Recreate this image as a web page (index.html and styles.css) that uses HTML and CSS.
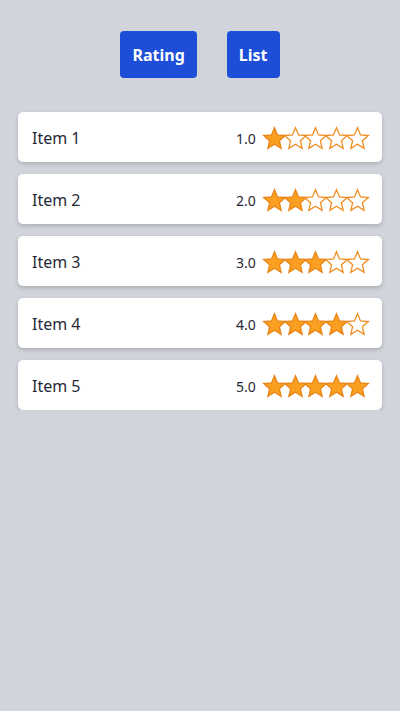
FILE: index.html
```html
<!DOCTYPE html>
<html>
<head>
<meta charset="utf-8">
<link rel="stylesheet" href="styles.css">
</head>
<body>
<svg width="0" height="0" class="defs">
  <defs>
    <path id="star" d="M12 1.6 L14.9 8.6 L22.4 9.2 L16.7 14.1 L18.4 21.5 L12 17.5 L5.6 21.5 L7.3 14.1 L1.6 9.2 L9.1 8.6 Z"/>
  </defs>
</svg>
<div class="toolbar">
  <button class="btn">Rating</button>
  <button class="btn">List</button>
</div>
<div class="list">
  <div class="card"><span class="name">Item 1</span><div class="rating"><span class="num">1.0</span><span class="stars">
    <svg class="s on" viewBox="0 0 24 24"><use href="#star"/></svg><svg class="s" viewBox="0 0 24 24"><use href="#star"/></svg><svg class="s" viewBox="0 0 24 24"><use href="#star"/></svg><svg class="s" viewBox="0 0 24 24"><use href="#star"/></svg><svg class="s" viewBox="0 0 24 24"><use href="#star"/></svg></span></div></div>
  <div class="card"><span class="name">Item 2</span><div class="rating"><span class="num">2.0</span><span class="stars">
    <svg class="s on" viewBox="0 0 24 24"><use href="#star"/></svg><svg class="s on" viewBox="0 0 24 24"><use href="#star"/></svg><svg class="s" viewBox="0 0 24 24"><use href="#star"/></svg><svg class="s" viewBox="0 0 24 24"><use href="#star"/></svg><svg class="s" viewBox="0 0 24 24"><use href="#star"/></svg></span></div></div>
  <div class="card"><span class="name">Item 3</span><div class="rating"><span class="num">3.0</span><span class="stars">
    <svg class="s on" viewBox="0 0 24 24"><use href="#star"/></svg><svg class="s on" viewBox="0 0 24 24"><use href="#star"/></svg><svg class="s on" viewBox="0 0 24 24"><use href="#star"/></svg><svg class="s" viewBox="0 0 24 24"><use href="#star"/></svg><svg class="s" viewBox="0 0 24 24"><use href="#star"/></svg></span></div></div>
  <div class="card"><span class="name">Item 4</span><div class="rating"><span class="num">4.0</span><span class="stars">
    <svg class="s on" viewBox="0 0 24 24"><use href="#star"/></svg><svg class="s on" viewBox="0 0 24 24"><use href="#star"/></svg><svg class="s on" viewBox="0 0 24 24"><use href="#star"/></svg><svg class="s on" viewBox="0 0 24 24"><use href="#star"/></svg><svg class="s" viewBox="0 0 24 24"><use href="#star"/></svg></span></div></div>
  <div class="card"><span class="name">Item 5</span><div class="rating"><span class="num">5.0</span><span class="stars">
    <svg class="s on" viewBox="0 0 24 24"><use href="#star"/></svg><svg class="s on" viewBox="0 0 24 24"><use href="#star"/></svg><svg class="s on" viewBox="0 0 24 24"><use href="#star"/></svg><svg class="s on" viewBox="0 0 24 24"><use href="#star"/></svg><svg class="s on" viewBox="0 0 24 24"><use href="#star"/></svg></span></div></div>
</div>
</body>
</html>
```
FILE: styles.css
```css
html, body {
  margin: 0;
  padding: 0;
  background: #d1d5db;
  font-family: "Noto Sans", "Open Sans", sans-serif;
  color: #1f2937;
}
.defs { position: absolute; }
.toolbar {
  display: flex;
  justify-content: center;
  gap: 30px;
  padding-top: 31px;
}
.btn {
  background: #1d4ed8;
  color: #fff;
  border: none;
  border-radius: 4px;
  height: 47px;
  padding: 0 12px;
  font-family: "Noto Sans", "Open Sans", sans-serif;
  font-weight: 700;
  font-size: 16px;
}
.list {
  display: flex;
  flex-direction: column;
  gap: 12px;
  margin: 34px 18px 0;
}
.card {
  box-sizing: border-box;
  background: #fff;
  border-radius: 5px;
  height: 50px;
  display: flex;
  align-items: center;
  justify-content: space-between;
  padding: 2px 12px 0 14px;
  box-shadow: 0 2px 4px rgba(0,0,0,0.18);
}
.name {
  font-size: 16px;
  color: #1f2937;
}
.rating {
  display: flex;
  align-items: center;
  gap: 6px;
}
.num {
  font-size: 14px;
  color: #1f2937;
}
.stars { display: flex; }
.s {
  width: 25px;
  height: 25px;
  margin-right: -4.2px;
  fill: #fff;
  stroke: #f08c1e;
  stroke-width: 1.2;
}
.s:last-child { margin-right: 0; }
.s.on { fill: #fb9f23; stroke: #e88517; }
```
